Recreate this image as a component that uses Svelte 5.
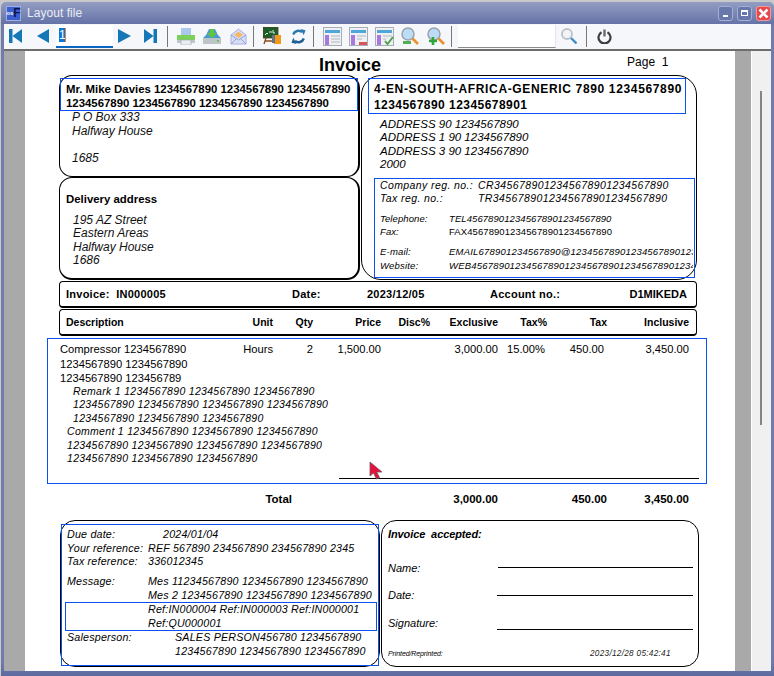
<script>
  const columns = ['Description', 'Unit', 'Qty', 'Price', 'Disc%', 'Exclusive', 'Tax%', 'Tax', 'Inclusive'];
</script>

<div class="screen">
  <div class="window">
    <header class="titlebar">
      <div class="appicon"><span class="os">os</span><span class="f">F</span></div>
      <div class="title">Layout file</div>
      <div class="controls">
        <div class="ctl"><span class="min"></span></div>
        <div class="ctl"><span class="max"></span></div>
        <div class="ctl close">
          <svg width="11" height="11" viewBox="0 0 11 11"><path d="M1.5 1.5l8 8M9.5 1.5l-8 8" stroke="#fff" stroke-width="2.6" /></svg>
        </div>
      </div>
    </header>

    <nav class="toolbar">
      <svg class="nav" width="13" height="14" viewBox="0 0 13 14"><path d="M0 0h3.5v14H0zM13 0v14L3.5 7z" fill="#1577b5" /></svg>
      <svg class="nav prev" width="12" height="14" viewBox="0 0 12 14"><path d="M12 0v14L0 7z" fill="#1577b5" /></svg>
      <div class="pageinput"><span class="sel">1</span><span class="caret"></span></div>
      <svg class="nav next" width="13" height="14" viewBox="0 0 13 14"><path d="M0 0v14l13-7z" fill="#1577b5" /></svg>
      <svg class="nav last" width="13" height="14" viewBox="0 0 13 14"><path d="M13 0H9.500v14H13zM0 0v14l9.500-7z" fill="#1577b5" /></svg>
      <span class="sep first"></span>

      <div class="cell"><svg width="18" height="17" viewBox="0 0 18 17">
        <rect x="4" y="0" width="10" height="7" fill="#a9c8ec" /><rect x="0" y="7" width="18" height="5" fill="#7dd05a" /><rect x="0" y="12" width="18" height="3" fill="#bfc6cc" /><rect x="4" y="12" width="10" height="5" fill="#e9edf1" stroke="#9aa5ad" stroke-width=".6" />
      </svg></div>
      <div class="cell"><svg width="18" height="17" viewBox="0 0 18 17">
        <path d="M3 7l3-6h6l3 6 3 3H0z" fill="#4a9ccd" /><path d="M7 1h4v4h3l-5 5-5-5h3z" fill="#62c43a" /><path d="M0 10h18v5a1 1 0 0 1-1 1H1a1 1 0 0 1-1-1z" fill="#bcc3c9" /><rect x="14" y="12" width="2" height="1.500" fill="#62c43a" />
      </svg></div>
      <div class="cell"><svg width="17" height="17" viewBox="0 0 17 17">
        <path d="M1 7L8.500 1 16 7v9H1z" fill="#d8def6" stroke="#a8b2e2" /><path d="M4 7l4.500-3.500L13 7l-4.500 3z" fill="#f4b968" /><path d="M1 7l7.500 5L16 7M1 16l6-6M16 16l-6-6" fill="none" stroke="#96a4de" />
      </svg></div>
      <span class="sep"></span>

      <div class="cell"><svg width="18" height="18" viewBox="0 0 18 18">
        <rect x="0" y="0" width="15" height="11" fill="#1c5d28" stroke="#5a3a1a" stroke-width=".8" /><path d="M2 8l2-2 1 1M6 5h3M10 3v3h2" stroke="#dff2df" fill="none" /><path d="M3 11l-2 6M10 11l2 6M2 14h9" stroke="#8a4a1a" stroke-width="1.300" /><rect x="11" y="8" width="7" height="9" fill="#f09a1c" /><rect x="9" y="8" width="3" height="8" fill="#65708a" />
      </svg></div>
      <div class="cell"><svg width="15" height="15" viewBox="0 0 15 15">
        <path d="M2.200 5.500A5.500 5.500 0 0 1 11 3.200" fill="none" stroke="#2b78ad" stroke-width="2.400" /><path d="M9.500 0l5 1.200-1.800 5z" fill="#2b78ad" /><path d="M12.800 9.500A5.500 5.500 0 0 1 4 11.800" fill="none" stroke="#1d5f92" stroke-width="2.400" /><path d="M5.500 15L.5 13.800l1.800-5z" fill="#1d5f92" />
      </svg></div>
      <span class="sep"></span>

      <div class="cell"><svg width="19" height="19" viewBox="0 0 19 19">
        <rect x=".5" y=".5" width="18" height="18" fill="#eef0f4" stroke="#a9adb4" /><rect x="2" y="3" width="15" height="3" fill="#4fa6d8" /><rect x="2" y="8" width="4" height="10" fill="#a878e0" /><path d="M8 9h9M8 12h9M8 15h9" stroke="#cfd4da" stroke-width="2" />
      </svg></div>
      <div class="cell"><svg width="19" height="19" viewBox="0 0 19 19">
        <rect x=".5" y=".5" width="18" height="18" fill="#eef0f4" stroke="#a9adb4" /><rect x="2" y="3" width="15" height="3" fill="#4fa6d8" /><rect x="2" y="8" width="4" height="10" fill="#a878e0" /><path d="M8 9h9M8 12h5" stroke="#cfd4da" stroke-width="2" /><rect x="10" y="15" width="8" height="3" fill="#d9535a" />
      </svg></div>
      <div class="cell"><svg width="19" height="19" viewBox="0 0 19 19">
        <rect x=".5" y=".5" width="18" height="18" fill="#eef0f4" stroke="#a9adb4" /><rect x="2" y="3" width="15" height="3" fill="#4fa6d8" /><rect x="2" y="8" width="4" height="10" fill="#a878e0" /><path d="M8 9h9M8 12h3" stroke="#cfd4da" stroke-width="2" /><path d="M10 14l2.500 3L18 10" fill="none" stroke="#4aa04a" stroke-width="1.800" />
      </svg></div>
      <div class="cell"><svg width="18" height="18" viewBox="0 0 18 18">
        <circle cx="7" cy="7" r="6" fill="#bcdcf6" stroke="#9aa3ab" stroke-width="1.500" /><path d="M11.500 11.500L17 17" stroke="#ec8f2c" stroke-width="2.600" /><rect x="2" y="14" width="8" height="3" fill="#52ad55" />
      </svg></div>
      <div class="cell"><svg width="18" height="18" viewBox="0 0 18 18">
        <circle cx="7" cy="7" r="6" fill="#bcdcf6" stroke="#9aa3ab" stroke-width="1.500" /><path d="M11.500 11.500L17 17" stroke="#ec8f2c" stroke-width="2.600" /><path d="M2 14h8M6 10v8" stroke="#2fa53a" stroke-width="2.600" />
      </svg></div>
      <span class="sep"></span>

      <div class="searchinput"></div>
      <svg class="mag" width="16" height="16" viewBox="0 0 16 16">
        <circle cx="6" cy="6" r="5" fill="#f2f5f8" stroke="#bcc2c8" stroke-width="1.800" /><path d="M10 10l5.500 5.500" stroke="#3f8fc4" stroke-width="2.400" />
      </svg>
      <span class="sep last-sep"></span>
      <svg class="power" width="15" height="15" viewBox="0 0 15 15">
        <path d="M4.500 3.200a6 6 0 1 0 6 0" fill="none" stroke="#3d3d3d" stroke-width="2.200" /><path d="M7.500 .5v7" stroke="#6a6a6a" stroke-width="2.400" />
      </svg>
    </nav>

    <div class="viewer">
      <div class="gutter left"></div>
      <main class="page">
        <div class="pagehead">
          <div class="doctitle">Invoice</div>
          <div class="pageno">Page&nbsp;&nbsp;1</div>
        </div>

        <div class="sheet">
          <section class="addresses">
            <div class="leftcol">
              <div class="box billto">
                <div class="outline billto-outline"></div>
                <div class="name">Mr. Mike Davies 1234567890 1234567890 1234567890<br />1234567890 1234567890 1234567890 1234567890</div>
                <div class="addr">P O Box 333<br />Halfway House<br /><br />1685</div>
              </div>
              <div class="box delivery">
                <div class="name">Delivery address</div>
                <div class="addr deliv">195 AZ Street<br />Eastern Areas<br />Halfway House<br />1686</div>
              </div>
            </div>

            <div class="box company">
              <div class="outline company-outline"></div>
              <div class="outline regs-outline"></div>
              <div class="coname"><div class="co1">4-EN-SOUTH-AFRICA-GENERIC 7890 1234567890</div><div class="co2">1234567890 12345678901</div></div>
              <div class="coaddr">ADDRESS 90 1234567890<br />ADDRESS 1 90 1234567890<br />ADDRESS 3 90 1234567890<br />2000</div>
              <div class="regs">
                <span>Company reg. no.:</span><span>CR3456789012345678901234567890</span>
                <span>Tax reg. no.:</span><span>TR3456789012345678901234567890</span>
              </div>
              <div class="contact">
                <span>Telephone:</span><span>TEL456789012345678901234567890</span>
                <span>Fax:</span><span class="upright">FAX456789012345678901234567890</span>
              </div>
              <div class="contact web">
                <span>E-mail:</span><span>EMAIL678901234567890@1234567890123456789012345</span>
                <span>Website:</span><span>WEB4567890123456789012345678901234567890123456</span>
              </div>
            </div>
          </section>

          <section class="bar inv">
            <div>Invoice:&nbsp; IN000005</div>
            <div>Date:</div>
            <div>2023/12/05</div>
            <div class="acct"><span>Account no.:</span><span class="acctid">D1MIKEDA</span></div>
          </section>

          <section class="bar cols tracks">
            {#each columns as c, i}
              <div class:desc={i === 0}>{c}</div>
            {/each}
          </section>

          <section class="items">
            <div class="tracks itemrow">
              <div class="itemname">Compressor 1234567890<br />1234567890 1234567890<br />1234567890 123456789</div>
              <div>Hours</div>
              <div>2</div>
              <div>1,500.00</div>
              <div></div>
              <div>3,000.00</div>
              <div class="pr2">15.00%</div>
              <div class="pr3">450.00</div>
              <div>3,450.00</div>
            </div>
            <div class="note remark">Remark 1 1234567890 1234567890 1234567890<br />1234567890 1234567890 1234567890 1234567890<br />1234567890 1234567890 1234567890</div>
            <div class="note comment">Comment 1 1234567890 1234567890 1234567890<br />1234567890 1234567890 1234567890 1234567890<br />1234567890 1234567890 1234567890</div>
            <div class="rule"></div>
          </section>

          <section class="tracks totals">
            <div class="totlabel">Total</div>
            <div></div>
            <div></div>
            <div>3,000.00</div>
            <div></div>
            <div>450.00</div>
            <div>3,450.00</div>
          </section>

          <section class="footer">
            <div class="box terms">
              <div class="outline terms-outline"></div>
              <div class="frow"><span>Due date:</span><span class="indent1">2024/01/04</span></div>
              <div class="frow"><span>Your reference:</span><span>REF 567890 234567890 234567890 2345</span></div>
              <div class="frow"><span>Tax reference:</span><span>336012345</span></div>
              <div class="frow msg"><span>Message:</span><span>Mes 11234567890 1234567890 1234567890</span></div>
              <div class="frow"><span></span><span>Mes 2 1234567890 1234567890 1234567890</span></div>
              <div class="refs">
                <div class="frow"><span></span><span>Ref:IN000004 Ref:IN000003 Ref:IN000001</span></div>
                <div class="frow"><span></span><span>Ref:QU000001</span></div>
              </div>
              <div class="frow"><span>Salesperson:</span><span class="indent2">SALES PERSON456780 1234567890</span></div>
              <div class="frow"><span></span><span class="indent2">1234567890 1234567890 1234567890</span></div>
            </div>

            <div class="box accept">
              <div class="acchead">Invoice&nbsp; accepted:</div>
              <div class="sign name-row"><span>Name:</span><i></i></div>
              <div class="sign date-row"><span>Date:</span><i></i></div>
              <div class="sign sig"><span>Signature:</span><i></i></div>
              <div class="printed"><span class="pr-label">Printed/Reprinted:</span><span class="pr-date">2023/12/28 05:42:41</span></div>
            </div>
          </section>
        </div>

        <svg class="cursor" width="15" height="19" viewBox="0 0 15 19">
          <path d="M1 1v14l3.500-3 3 6 3-1.500-2.800-5.500H13z" fill="#e8103c" stroke="#6b5a60" stroke-width=".8" />
        </svg>
      </main>
      <div class="gutter right"></div>
      <aside class="scrollpanel"><div class="thumb"></div></aside>
    </div>
  </div>
</div>

<style>
  :global(body) { margin: 0; background: #c9c9c9; }
  .screen { width: 774px; height: 676px; overflow: hidden; background: #c9c9c9; font-family: "Liberation Sans", Arial, sans-serif; color: #000; }
  .window { box-sizing: border-box; width: 773px; height: 674px; margin: 2px 0 0 1px; padding: 0 3px 5px 3px; border-radius: 5px 5px 0 0; background: linear-gradient(#939dc3 0, #6572a7 22px, #6f7cac 23px, #6f7cac 660px, #5d6a9f 100%); display: flex; flex-direction: column; }

  .titlebar { height: 22px; flex: none; display: flex; align-items: center; }
  .appicon { width: 15px; height: 15px; margin-left: 2px; background: #3c5fd0; display: flex; align-items: center; justify-content: center; line-height: 1; border: 1px solid #9fb0e0; box-sizing: border-box; }
  .os { font-size: 6px; font-weight: 700; color: #fff; }
  .f { font-size: 12px; font-weight: 700; color: #0c1450; }
  .title { margin-left: 6px; font-size: 12px; color: #e9ecf6; letter-spacing: .05px; }
  .controls { margin-left: auto; display: flex; gap: 4px; margin-right: 0; }
  .ctl { box-sizing: border-box; width: 15px; height: 15px; border: 1px solid #a4afd2; border-radius: 3px; background: #6878ac; display: flex; align-items: center; justify-content: center; position: relative; }
  .close { background: #e8484c; border-color: #f09a9a; }
  .min { width: 5px; height: 2px; background: #fff; margin-top: 6px; }
  .max { box-sizing: border-box; width: 7px; height: 6px; border: 1px solid #fff; border-top-width: 2px; }

  .toolbar { box-sizing: border-box; height: 27px; flex: none; background: #f6f7fb; border-bottom: 2px solid #6d6d6d; display: flex; align-items: center; padding: 0 0 1px 5px; }
  .prev { margin-left: 15px; }
  .pageinput { box-sizing: border-box; width: 57px; height: 23px; margin-left: 7px; background: #fff; border-bottom: 2px solid #0a66c0; display: flex; align-items: center; padding-left: 3px; font-size: 13px; }
  .sel { background: #0a78d7; color: #fff; width: 6px; line-height: 14px; text-align: center; font-size: 12px; }
  .caret { width: 1px; height: 14px; background: #e8873a; }
  .next { margin-left: 5px; }
  .last { margin-left: 13px; }
  .sep { width: 1px; height: 21px; background: #777; margin: 0 5px 0 2px; flex: none; }
  .sep.first { margin-left: 10px; }
  .cell { width: 26px; display: flex; justify-content: center; align-items: center; flex: none; }
  .searchinput { box-sizing: border-box; width: 98px; height: 23px; margin-left: 1px; background: #fff; border-bottom: 1px solid #8a8a8a; border-right: 1px solid #e6e6e6; }
  .mag { margin-left: 5px; }
  .sep.last-sep { margin-left: 9px; margin-right: 0; }
  .power { margin-left: 10px; }

  .viewer { flex: 1; min-height: 0; display: flex; background: #fff; }
  .gutter { background: #a9a9a9; flex: none; }
  .gutter.left { width: 21px; }
  .gutter.right { width: 16px; }
  .scrollpanel { flex: 1; background: #f0f0f0; border-left: 1px solid #fff; padding: 40px 0 0 8px; }
  .thumb { width: 2px; height: 334px; background: #858585; }

  .page { width: 710px; flex: none; background: #fff; position: relative; overflow: hidden; }
  .pagehead { height: 24px; display: flex; align-items: flex-start; padding-left: 294px; }
  .doctitle { font-size: 18px; font-weight: 700; line-height: 29px; }
  .pageno { margin-left: 246px; font-size: 12px; line-height: 22px; }

  .sheet { margin-left: 34px; width: 639px; }
  .addresses { display: grid; grid-template-columns: 301px 336px; gap: 0 1px; height: 205px; }
  .leftcol { display: grid; grid-template-rows: 102px 103px; }
  .box { box-sizing: border-box; border: 1px solid #000; position: relative; }
  .billto, .delivery { border-radius: 13px; border-right-width: 2px; padding-left: 6px; }
  .billto { padding-top: 6px; }
  .delivery { padding-top: 14px; border-bottom-width: 2px; }
  .name { font-size: 11.4px; font-weight: 700; line-height: 14px; white-space: nowrap; }
  .addr { margin: 1px 0 0 6px; font-size: 12px; font-style: italic; line-height: 13.600px; color: #111; }
  .deliv { margin-left: 7px; margin-top: 7.500px; }

  .outline { position: absolute; box-sizing: border-box; border: 1px solid #0a50f0; pointer-events: none; }
  .billto-outline { left: 0; top: 2px; width: 298px; height: 33px; }
  .company-outline { left: 6px; top: 2px; width: 318px; height: 36px; }
  .regs-outline { left: 12px; top: 102px; width: 321px; height: 100px; }
  .terms-outline { left: 0; top: 3px; width: 318px; height: 142px; }

  .company { border-radius: 20px; padding: 5px 0 0 12px; }
  .coname { font-size: 12px; font-weight: 700; line-height: 16px; white-space: nowrap; }
  .co1 { letter-spacing: .65px; }
  .co2 { letter-spacing: .45px; }
  .coaddr { margin: 4.500px 0 0 6px; font-size: 11.500px; font-style: italic; line-height: 13.600px; }
  .regs, .contact { margin-left: 6px; width: 313px; display: grid; font-style: italic; white-space: nowrap; }
  .regs span, .contact span { overflow: hidden; }
  .regs { margin-top: 7px; grid-template-columns: 98px 1fr; font-size: 10.500px; line-height: 13px; letter-spacing: .4px; }
  .contact { margin-top: 7px; grid-template-columns: 69px 1fr; font-size: 9.500px; line-height: 13.500px; letter-spacing: .08px; }
  .contact.web { margin-top: 6px; line-height: 14.500px; letter-spacing: .2px; }
  .upright { font-style: normal; }

  .bar { box-sizing: border-box; height: 27px; border: 1px solid #000; border-bottom-width: 2px; border-radius: 4px; width: 638px; align-items: center; font-size: 10.500px; font-weight: 700; }
  .inv { margin-top: 1px; display: grid; grid-template-columns: 226px 75px 123px 1fr; padding: 0 9px 0 6px; font-size: 11px; letter-spacing: .25px; }
  .acct { display: flex; justify-content: space-between; }
  .acctid { letter-spacing: 0; }
  .cols { margin-top: 1px; }
  .tracks { display: grid; grid-template-columns: 180px 33px 40px 68px 49px 68px 49px 60px 82px; text-align: right; }
  .desc { text-align: left; padding-left: 6px; }

  .items { box-sizing: border-box; margin: 2px 0 0 -12px; width: 660px; height: 146px; border: 1px solid #0a50f0; padding: 3px 0 0 12px; position: relative; }
  .itemrow { font-size: 11.200px; line-height: 14.500px; align-items: start; }
  .itemname { text-align: left; white-space: nowrap; }
  .pr2 { padding-right: 2px; }
  .pr3 { padding-right: 3px; }
  .note { font-size: 10.500px; font-style: italic; line-height: 13.500px; white-space: nowrap; letter-spacing: .3px; }
  .remark { margin: -1px 0 0 13px; }
  .comment { margin-left: 7px; }
  .rule { width: 360px; height: 1px; background: #000; margin: 12px 0 0 279px; }

  .totals { margin-top: 8px; font-size: 11.500px; font-weight: 700; line-height: 14px; padding-left: 1px; width: 638px; }
  .totlabel { grid-column: 1 / 4; padding-right: 21px; }

  .footer { margin: 14px 0 0 1px; display: grid; grid-template-columns: 320px 318px; gap: 0 1px; height: 147px; }
  .terms, .accept { border-radius: 15px; }
  .terms { padding: 7px 0 0 6px; font-size: 10.700px; font-style: italic; line-height: 13.500px; letter-spacing: .2px; white-space: nowrap; }
  .frow { display: grid; grid-template-columns: 81px 1fr; }
  .msg { margin-top: 6.500px; }
  .indent1 { padding-left: 15px; }
  .indent2 { padding-left: 27px; }
  .refs { box-sizing: border-box; width: 312px; margin-left: -2px; padding-left: 1px; border: 1px solid #0a50f0; }
  .accept { padding: 7px 0 0 6px; font-size: 11px; font-style: italic; line-height: 13.500px; }
  .acchead { font-weight: 700; letter-spacing: -.1px; }
  .sign { display: grid; grid-template-columns: 109px 196px; height: 27.500px; align-items: center; }
  .name-row { margin-top: 13px; }
  .sign i { display: block; height: 1px; background: #000; }
  .name-row i { margin: 0 0 2px 1px; }
  .sig i { margin-top: 12px; }
  .printed { margin-top: 10px; display: flex; align-items: center; }
  .pr-label { font-size: 7px; letter-spacing: -.1px; width: 202px; }
  .pr-date { font-size: 8.200px; letter-spacing: .3px; color: #222; }

  .cursor { position: absolute; left: 344px; top: 410px; }
</style>
